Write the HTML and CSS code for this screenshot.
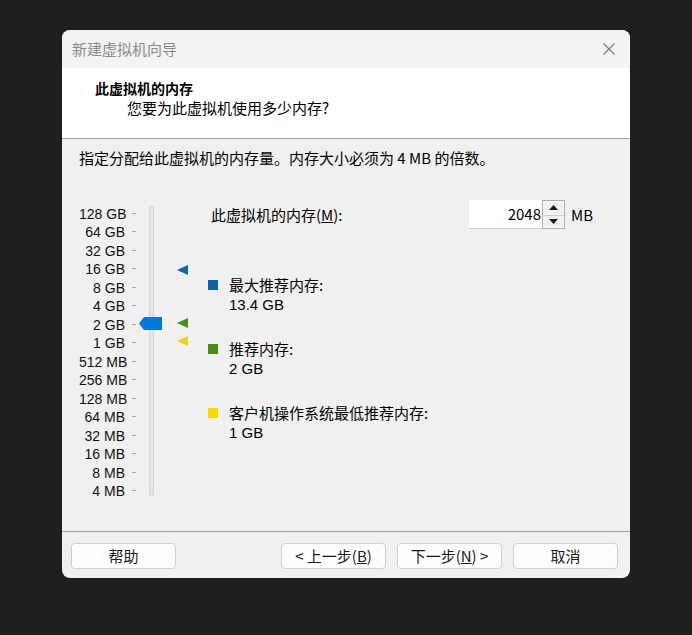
FILE: index.html
```html
<!DOCTYPE html>
<html lang="zh-CN">
<head>
<meta charset="utf-8">
<title>新建虚拟机向导</title>
<link rel="stylesheet" href="styles.css">
</head>
<body>
<div class="dialog">
  <div class="titlebar">
    <span class="title">新建虚拟机向导</span>
    <svg class="close" width="12" height="12" viewBox="0 0 12 12"><path d="M0.5 0.5 L11.5 11.5 M11.5 0.5 L0.5 11.5" stroke="#7a7a7a" stroke-width="1.1" fill="none"/></svg>
  </div>
  <div class="header">
    <div class="h-title">此虚拟机的内存</div>
    <div class="h-sub">您要为此虚拟机使用多少内存?</div>
  </div>
  <div class="body">
    <div class="desc">指定分配给此虚拟机的内存量。内存大小必须为 4 MB 的倍数。</div>
    <div class="main">
      <div class="scale">
        <div class="labels">
          <div class="row"><span class="lbl">128 GB</span><span class="tick"></span></div>
          <div class="row"><span class="lbl">64 GB</span><span class="tick"></span></div>
          <div class="row"><span class="lbl">32 GB</span><span class="tick"></span></div>
          <div class="row"><span class="lbl">16 GB</span><span class="tick"></span></div>
          <div class="row"><span class="lbl">8 GB</span><span class="tick"></span></div>
          <div class="row"><span class="lbl">4 GB</span><span class="tick"></span></div>
          <div class="row"><span class="lbl">2 GB</span><span class="tick"></span></div>
          <div class="row"><span class="lbl">1 GB</span><span class="tick"></span></div>
          <div class="row"><span class="lbl">512 MB</span><span class="tick"></span></div>
          <div class="row"><span class="lbl">256 MB</span><span class="tick"></span></div>
          <div class="row"><span class="lbl">128 MB</span><span class="tick"></span></div>
          <div class="row"><span class="lbl">64 MB</span><span class="tick"></span></div>
          <div class="row"><span class="lbl">32 MB</span><span class="tick"></span></div>
          <div class="row"><span class="lbl">16 MB</span><span class="tick"></span></div>
          <div class="row"><span class="lbl">8 MB</span><span class="tick"></span></div>
          <div class="row"><span class="lbl">4 MB</span><span class="tick"></span></div>
        </div>
        <div class="track"></div>
        <svg class="thumb" width="23" height="13" viewBox="0 0 23 13"><polygon points="0,6.5 5,0 23,0 23,13 5,13" fill="#0078d7"/></svg>
        <svg class="marker m-max" width="11" height="10" viewBox="0 0 11 10"><polygon points="0,5 11,0 11,10" fill="#1463ae"/></svg>
        <svg class="marker m-rec" width="11" height="10" viewBox="0 0 11 10"><polygon points="0,5 11,0 11,10" fill="#4e8e17"/></svg>
        <svg class="marker m-min" width="11" height="10" viewBox="0 0 11 10"><polygon points="0,5 11,0 11,10" fill="#f2d214"/></svg>
      </div>
      <div class="right">
        <div class="mem-row">
          <span class="mem-label">此虚拟机的内存(<u>M</u>):</span>
          <div class="input">2048</div>
          <div class="spin">
            <div class="spin-btn"><svg width="9" height="5" viewBox="0 0 9 5"><polygon points="0,5 4.5,0 9,5" fill="#1a1a1a"/></svg></div>
            <div class="spin-btn"><svg width="9" height="5" viewBox="0 0 9 5"><polygon points="0,0 9,0 4.5,5" fill="#1a1a1a"/></svg></div>
          </div>
          <span class="unit">MB</span>
        </div>
        <div class="legend">
          <div class="item">
            <span class="sq sq-blue"></span>
            <div class="item-text"><div>最大推荐内存:</div><div class="val">13.4 GB</div></div>
          </div>
          <div class="item">
            <span class="sq sq-green"></span>
            <div class="item-text"><div>推荐内存:</div><div class="val">2 GB</div></div>
          </div>
          <div class="item">
            <span class="sq sq-yellow"></span>
            <div class="item-text"><div>客户机操作系统最低推荐内存:</div><div class="val">1 GB</div></div>
          </div>
        </div>
      </div>
    </div>
  </div>
  <div class="footer">
    <button class="btn">帮助</button>
    <div class="spacer"></div>
    <button class="btn">&lt; 上一步(<u>B</u>)</button>
    <button class="btn">下一步(<u>N</u>) &gt;</button>
    <button class="btn">取消</button>
  </div>
</div>
</body>
</html>
```

FILE: styles.css
```css
html, body {
  margin: 0;
  padding: 0;
  background: #1f1f1f;
}
body {
  padding: 30px 0 0 62px;
  font-family: "Noto Sans CJK SC", sans-serif;
  font-size: 15px;
  color: #000;
}
.dialog {
  width: 568px;
  height: 548px;
  background: #f0f0f0;
  border-radius: 8px;
  overflow: hidden;
  display: flex;
  flex-direction: column;
}
.titlebar {
  height: 38px;
  flex-shrink: 0;
  background: #f3f3f3;
  display: flex;
  align-items: center;
  justify-content: space-between;
  padding: 0 15px 0 10px;
}
.title {
  color: #8a8a8a;
  font-size: 15px;
  line-height: 20px;
}
.close {
  display: block;
}
.header {
  height: 59px;
  flex-shrink: 0;
  background: #fff;
  border-bottom: 1px solid #a0a0a0;
  padding-top: 11px;
}
.h-title {
  font-weight: bold;
  font-size: 14px;
  line-height: 19px;
  padding-left: 33px;
}
.h-sub {
  font-size: 15px;
  line-height: 19px;
  padding-left: 65px;
}
.body {
  flex: 1;
  padding: 9px 17px 0 17px;
}
.desc {
  line-height: 20px;
}
.main {
  display: flex;
  align-items: flex-start;
  margin-top: 32px;
}
.scale {
  position: relative;
  width: 129px;
  flex-shrink: 0;
  margin-top: 4px;
  display: flex;
  align-items: flex-start;
}
.labels {
  display: flex;
  flex-direction: column;
}
.row {
  display: flex;
  align-items: center;
  height: 18.5px;
}
.lbl {
  width: 46px;
  text-align: right;
  white-space: nowrap;
  font-family: "Liberation Sans", Arial, sans-serif;
  font-size: 14px;
  line-height: 16px;
  padding-top: 1px;
  color: #111;
}
.tick {
  width: 4px;
  height: 1px;
  margin-left: 7px;
  background: #a8a8a8;
}
.track {
  width: 5px;
  height: 290px;
  margin-left: 13px;
  margin-top: 2px;
  box-sizing: border-box;
  background: #e4e4e4;
  border: 1px solid #d4d4d4;
  border-radius: 1px;
}
.thumb {
  position: absolute;
  left: 60px;
  top: 113px;
}
.marker {
  position: absolute;
  left: 98px;
}
.m-max { top: 61px; }
.m-rec { top: 114px; }
.m-min { top: 132px; }
.right {
  display: flex;
  flex-direction: column;
}
.mem-row {
  display: flex;
  align-items: center;
  height: 29px;
}
.mem-label {
  width: 258px;
  padding-left: 3px;
  line-height: 20px;
}
.input {
  width: 73px;
  height: 29px;
  box-sizing: border-box;
  background: #fff;
  border-bottom: 1px solid #d0d0d0;
  text-align: right;
  padding-right: 1px;
  line-height: 27px;
}
.spin {
  width: 23px;
  height: 29px;
  box-sizing: border-box;
  border: 1px solid #adadad;
  display: flex;
  flex-direction: column;
  background: #e9e9e9;
}
.spin-btn {
  flex: 1;
  display: flex;
  align-items: center;
  justify-content: center;
  border: 1px solid #f8f8f8;
  background: #f0f0f0;
}
.spin-btn + .spin-btn {
  border-top: 1px solid #c8c8c8;
}
.unit {
  margin-left: 6px;
  line-height: 20px;
}
.legend {
  display: flex;
  flex-direction: column;
  gap: 25px;
  margin-top: 46px;
}
.item {
  display: flex;
  align-items: flex-start;
}
.sq {
  width: 10px;
  height: 10px;
  margin-top: 5px;
  flex-shrink: 0;
}
.sq-blue { background: #0b62ad; }
.sq-green { background: #4b8b12; }
.sq-yellow { background: #fcd800; }
.item-text {
  margin-left: 11px;
  line-height: 19px;
}
.val {
  font-family: "Liberation Sans", Arial, sans-serif;
  font-size: 15px;
  padding-top: 2px;
  line-height: 18px;
}
.footer {
  flex-shrink: 0;
  border-top: 1px solid #a0a0a0;
  padding: 11px 12px 9px 9px;
  display: flex;
  gap: 11px;
}
.spacer {
  flex: 1;
}
.btn {
  width: 105px;
  height: 26px;
  box-sizing: border-box;
  background: #fdfdfd;
  border: 1px solid #d0d0d0;
  border-radius: 4px;
  font-family: "Noto Sans CJK SC", sans-serif;
  font-size: 15px;
  color: #1a1a1a;
  padding: 0;
  line-height: 22px;
}
```
